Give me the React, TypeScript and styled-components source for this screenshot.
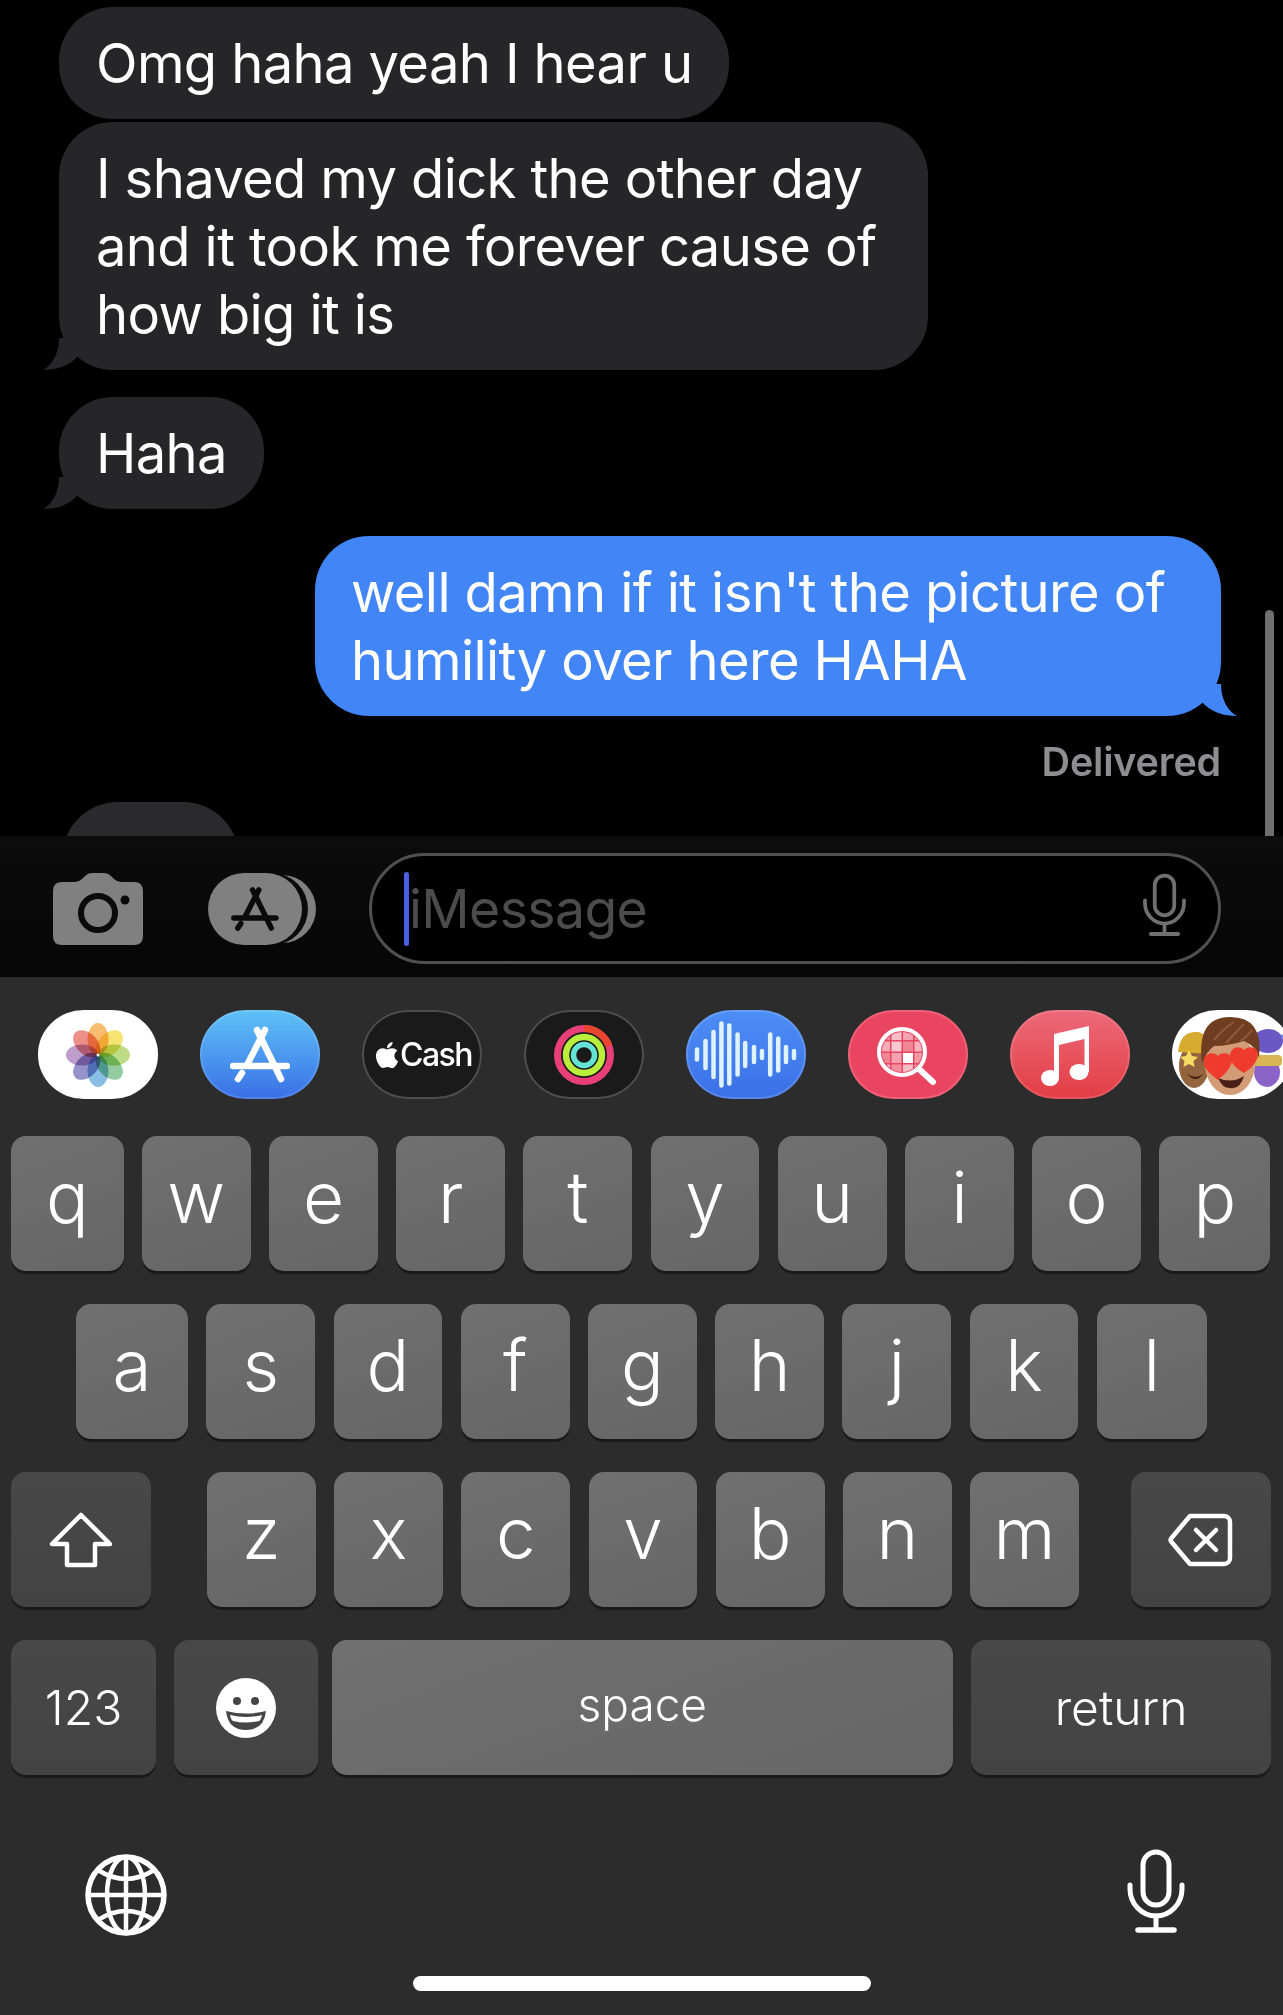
import React from 'react'
import styled, { createGlobalStyle } from 'styled-components'
import { FaApple } from 'react-icons/fa'

const GlobalStyle = createGlobalStyle`
  html, body {
    margin: 0;
    padding: 0;
    background: #000;
  }
  body {
    font-family: Inter, "Liberation Sans", sans-serif;
    color: #fff;
  }
`

const Screen = styled.div`
  width: 1283px;
  height: 2015px;
  overflow: hidden;
  display: flex;
  flex-direction: column;
`

/* ---------- conversation ---------- */

const Thread = styled.div`
  position: relative;
  height: 836px;
  padding-top: 7px;
  box-sizing: border-box;
  overflow: hidden;
  background: #000;
  display: flex;
  flex-direction: column;
`

const Bubble = styled.div<{ $width: number; $sent?: boolean; $gap?: number }>`
  position: relative;
  box-sizing: border-box;
  width: ${p => p.$width}px;
  margin-top: ${p => p.$gap ?? 0}px;
  margin-left: ${p => (p.$sent ? 315 : 59)}px;
  padding: 22px 0 22px ${p => (p.$sent ? 36 : 37)}px;
  border-radius: 54px;
  background: ${p => (p.$sent ? '#4285f6' : '#262628')};
  font-size: 54.3px;
  line-height: 68px;
  letter-spacing: -0.62px;
  white-space: nowrap;
`

const TypingBubble = styled.div`
  width: 177px;
  height: 112px;
  margin: 17px 0 0 62px;
  flex-shrink: 0;
  border-radius: 56px;
  background: #2a2a2c;
`

const Tail = styled.svg<{ $sent?: boolean }>`
  position: absolute;
  bottom: 0;
  width: 35px;
  height: 32px;
  ${p => (p.$sent ? 'right: -16px; transform: scaleX(-1);' : 'left: -16px;')}
`

const Delivered = styled.div`
  align-self: flex-end;
  margin: 23px 62px 0 0;
  font-size: 39.5px;
  line-height: 46px;
  font-weight: 600;
  letter-spacing: -0.2px;
  color: #8e8e90;
`

const ScrollThumb = styled.div`
  position: absolute;
  top: 610px;
  bottom: 0;
  left: 1265px;
  width: 9px;
  border-radius: 5px 5px 0 0;
  background: #6f6f6f;
`

/* ---------- input bar ---------- */

const InputBar = styled.div`
  height: 141px;
  box-sizing: border-box;
  padding: 4px 62px 0 53px;
  display: flex;
  align-items: center;
  background: linear-gradient(180deg, #0c0c0c, #060606);
`

const ToolIcon = styled.svg<{ $gap: number }>`
  flex-shrink: 0;
  margin-right: ${p => p.$gap}px;
`

const InputField = styled.div`
  flex: 1;
  height: 111px;
  box-sizing: border-box;
  padding: 0 16px 0 32px;
  display: flex;
  align-items: center;
  border: 3px solid #505050;
  border-radius: 56px;
  background: #000;
`

const Caret = styled.div`
  width: 5px;
  height: 74px;
  border-radius: 3px;
  background: #4a5fe6;
`

const Placeholder = styled.span`
  flex: 1;
  font-size: 53.5px;
  letter-spacing: -0.6px;
  color: #4c4c4c;
`

/* ---------- keyboard ---------- */

const Keyboard = styled.div`
  flex: 1;
  display: flex;
  flex-direction: column;
  background: #2c2c2c;
`

const Drawer = styled.div`
  display: flex;
  gap: 42px;
  margin: 33px 0 37px;
  padding-left: 38px;
  overflow: hidden;
`

const AppIcon = styled.div<{ $bg: string; $edge?: string }>`
  flex: 0 0 120px;
  height: 89px;
  box-sizing: border-box;
  border-radius: 46px / 44px;
  background: ${p => p.$bg};
  box-shadow: inset 0 0 0 2px ${p => p.$edge ?? 'transparent'};
  display: flex;
  align-items: center;
  justify-content: center;
  overflow: hidden;
  svg {
    display: block;
  }
`

const CashLabel = styled.span`
  margin-left: -2px;
  font-size: 32px;
  font-weight: 500;
  letter-spacing: -1.5px;
  color: #fff;
`

const Petal = styled.ellipse`
  mix-blend-mode: multiply;
  opacity: 0.72;
`

const KeyRow = styled.div<{ $left?: number }>`
  display: flex;
  gap: 18.4px;
  padding-left: ${p => p.$left ?? 11}px;
  padding-right: 12px;
  margin-bottom: 33px;
`

const KeyGroup = styled.div`
  display: flex;
  gap: 18.4px;
  margin-left: 37.6px;
  margin-right: auto;
`

const Key = styled.div<{ $w?: number; $dark?: boolean; $size?: number; $lift?: number; $nudge?: number }>`
  flex: ${p => (p.$w ? `0 0 ${p.$w}px` : '1 1 0')};
  height: 135px;
  box-sizing: border-box;
  margin-left: ${p => p.$nudge ?? 0}px;
  padding-bottom: ${p => p.$lift ?? 0}px;
  display: flex;
  align-items: center;
  justify-content: center;
  border-radius: 15px;
  background: ${p =>
    p.$dark
      ? 'linear-gradient(180deg, #484848, #434343)'
      : 'linear-gradient(160deg, #707070, #666666)'};
  box-shadow: 0 3px 0 #1a1a1a;
  font-size: ${p => p.$size ?? 71}px;
  font-weight: 300;
  color: #fff;
`

const BottomRow = styled.div`
  display: flex;
  justify-content: space-between;
  padding: 0 77px 0 76px;
  margin-top: 38px;
`

const HomeBar = styled.div`
  width: 458px;
  height: 15px;
  margin: 30px auto 0;
  border-radius: 8px;
  background: #fff;
`

/* ---------- drawings ---------- */

function AppStoreStrokes() {
  return (
    <>
      <path d="M27 5 L51 54" />
      <path d="M35 5 L17 40" />
      <path d="M3 41 H57" />
      <path d="M12 48 L8 54" />
    </>
  )
}

function MicIcon({ color, size }: { color: string; size: number }) {
  return (
    <svg width={size} height={size} viewBox="0 0 100 100" fill="none" stroke={color} strokeWidth="5" strokeLinecap="round">
      <rect x="37" y="6" width="26" height="53" rx="13" />
      <path d="M24 39 v4 a26 27 0 0 0 52 0 v-4" />
      <path d="M50 70 V84" />
      <path d="M32 84 H68" strokeWidth="5.5" />
    </svg>
  )
}

function Globe() {
  return (
    <svg width="100" height="100" viewBox="0 0 100 100" fill="none" stroke="#fff" strokeWidth="4.5">
      <circle cx="50" cy="49" r="38" strokeWidth="5.5" />
      <ellipse cx="50" cy="49" rx="19" ry="38" />
      <path d="M50 11 V87 M12 49 H88" />
      <path d="M22 24 Q50 42 78 24" />
      <path d="M22 74 Q50 56 78 74" />
    </svg>
  )
}

function ShiftIcon() {
  return (
    <svg width="70" height="60" viewBox="0 0 70 60" fill="none" stroke="#fff" strokeWidth="4.5" strokeLinejoin="round">
      <path d="M35 5 L6 34 H21 V55 H49 V34 H64 Z" />
    </svg>
  )
}

function DeleteIcon() {
  return (
    <svg width="72" height="58" viewBox="0 0 72 58" fill="none" stroke="#fff" strokeWidth="4.5" strokeLinecap="round" strokeLinejoin="round">
      <path d="M25 5 H59 a6 6 0 0 1 6 6 V47 a6 6 0 0 1 -6 6 H25 L6.5 31 a3 3 0 0 1 0 -4 Z" />
      <path d="M31 19 L51 39 M51 19 L31 39" />
    </svg>
  )
}

function EmojiIcon() {
  return (
    <svg width="60" height="60" viewBox="0 0 60 60">
      <circle cx="30" cy="30" r="30" fill="#fff" />
      <circle cx="21" cy="23" r="4" fill="#464646" />
      <circle cx="39" cy="23" r="4" fill="#464646" />
      <path d="M10 33 Q30 38 50 33 Q48 52 30 52 Q12 52 10 33 Z" fill="#464646" />
      <path d="M14 37 Q30 41 46 37 Q45 42 43 43 Q30 46 17 43 Q15 42 14 37 Z" fill="#fff" />
    </svg>
  )
}

const petals = ['#f5a33a', '#f2d83b', '#a5cf57', '#69b97a', '#5aa5d8', '#6d69b5', '#a577b8', '#e4645b']

function PhotosGlyph() {
  return (
    <svg width="120" height="89" viewBox="0 0 120 89">
      {petals.map((color, i) => (
        <Petal key={color} cx="60" cy="29" rx="10.5" ry="16" fill={color} transform={`rotate(${i * 45} 60 45)`} />
      ))}
      <circle cx="60" cy="45" r="1.5" fill="#fff" />
    </svg>
  )
}

function RingsGlyph() {
  return (
    <svg width="120" height="89" viewBox="0 0 120 89" fill="none">
      <circle cx="60" cy="45" r="26.5" stroke="#e93f78" strokeWidth="7" />
      <path d="M60 18.5 A26.5 26.5 0 0 1 85 36" stroke="#e8452e" strokeWidth="7" />
      <circle cx="60" cy="45" r="18" stroke="#b9ee3c" strokeWidth="6.5" />
      <circle cx="60" cy="45" r="10.5" stroke="#63e3d3" strokeWidth="5.5" />
    </svg>
  )
}

const waveBars = [
  [11, 10], [19.5, 27], [27.5, 45], [35.4, 62], [43.3, 58], [51.6, 40], [59.2, 23],
  [68, 15], [76, 7], [84.2, 40], [92.2, 32], [100, 15], [108, 7],
]

function WaveGlyph() {
  return (
    <svg width="120" height="89" viewBox="0 0 120 89" stroke="#dff3ff" strokeWidth="4.5" strokeLinecap="round">
      {waveBars.map(([x, h]) => (
        <line key={x} x1={x} x2={x} y1={44.5 - h / 2} y2={44.5 + h / 2} />
      ))}
    </svg>
  )
}

function LensGlyph() {
  const cells = [
    0.4, 0.65, 0.5, 0.4,
    0.55, 0.7, 0.35, 0.6,
    0.35, 0.5, 1, 0.45,
    0.6, 0.4, 0.65, 0.5,
  ]
  return (
    <svg width="120" height="89" viewBox="0 0 120 89">
      <clipPath id="lens-clip">
        <circle cx="54" cy="42" r="20" />
      </clipPath>
      <g clipPath="url(#lens-clip)">
        {cells.map((opacity, i) => (
          <rect
            key={i}
            x={32 + (i % 4) * 11.5}
            y={20 + Math.floor(i / 4) * 11.5}
            width="10"
            height="10"
            fill="#fff"
            opacity={opacity}
          />
        ))}
      </g>
      <circle cx="54" cy="42" r="23" fill="none" stroke="#fff" strokeWidth="4" />
      <path d="M71 59 L85 72" stroke="#fff" strokeWidth="6" strokeLinecap="round" />
    </svg>
  )
}

function MusicGlyph() {
  return (
    <svg width="120" height="89" viewBox="0 0 120 89" fill="#fff">
      <path d="M44 24 L79 16 V62 H74.5 V29 L49 35 V68 H44 Z" />
      <ellipse cx="40" cy="68" rx="9" ry="8" />
      <ellipse cx="69" cy="62" rx="9.5" ry="8" />
    </svg>
  )
}

function MemojiGlyph() {
  return (
    <svg width="120" height="89" viewBox="0 0 120 89">
      <ellipse cx="95" cy="62" rx="13" ry="15" fill="#8a62c8" />
      <ellipse cx="96" cy="31" rx="15" ry="12" fill="#6a58c4" />
      <rect x="81" y="45" width="29" height="11" rx="4" fill="#d9b452" />
      <circle cx="111" cy="26" r="1.6" fill="#3f7fe0" />
      <circle cx="116" cy="50" r="1.6" fill="#f1c232" />
      <ellipse cx="22" cy="56" rx="15" ry="22" fill="#94643f" />
      <path d="M6 42 Q8 22 24 22 Q38 22 38 44 Z" fill="#d6ab2f" />
      <path d="M17 40 l3 6 6 1 -4.5 4 1 6 -5.5 -3 -5.5 3 1 -6 -4.5 -4 6 -1 Z" fill="#f6dc63" />
      <path d="M15 64 Q24 70 31 64 Q24 74 15 64 Z" fill="#3a2012" />
      <ellipse cx="58" cy="54" rx="25" ry="31" fill="#d49c76" />
      <path d="M30 54 Q24 7 58 7 Q92 7 87 48 Q84 36 72 31 Q56 36 42 36 Q34 42 30 54 Z" fill="#6f3d20" />
      <path d="M42 30 Q52 18 62 12 M54 33 Q64 22 72 14 M68 31 Q76 26 80 20" fill="none" stroke="#93583a" strokeWidth="2" />
      <path d="M46 68 Q60 74 72 66 Q68 80 58 78 Q50 78 46 68 Z" fill="#4a1f18" />
      <path d="M46 70 C37 63 31 58 32 50 C33 43 42 41 46 46 C50 41 60 43 60 51 C59 58 53 64 46 70 Z" fill="#ee3b2e" />
      <path d="M72 63 C63 58 58 52 58 45 C59 37 68 35 72 40 C77 35 86 37 86 45 C85 52 80 58 72 63 Z" fill="#ee3b2e" />
    </svg>
  )
}

const topRow = ['w', 'e', 'r', 't', 'y', 'u', 'i', 'o']
const middleRow = ['s', 'd', 'f', 'g', 'h', 'j', 'k']
const bottomRow = ['z', 'x', 'c', 'v', 'b', 'n', 'm']

const lift = 14
const keyWidth = 108.8

export default function App() {
  return (
    <Screen>
      <GlobalStyle />
      <Thread>
        <Bubble $width={670}>Omg haha yeah I hear u</Bubble>
        <Bubble $width={869} $gap={3}>
          I shaved my dick the other day
          <br />
          and it took me forever cause of
          <br />
          how big it is
          <Tail viewBox="0 0 35 32">
            <path d="M16 0 C16 14 10 27 0 32 C14 32 26 28 35 18 V0 Z" fill="#262628" />
          </Tail>
        </Bubble>
        <Bubble $width={205} $gap={27}>
          Haha
          <Tail viewBox="0 0 35 32">
            <path d="M16 0 C16 14 10 27 0 32 C14 32 26 28 35 18 V0 Z" fill="#262628" />
          </Tail>
        </Bubble>
        <Bubble $width={906} $sent $gap={27}>
          well damn if it isn't the picture of
          <br />
          humility over here HAHA
          <Tail viewBox="0 0 35 32" $sent>
            <path d="M16 0 C16 14 10 27 0 32 C14 32 26 28 35 18 V0 Z" fill="#4285f6" />
          </Tail>
        </Bubble>
        <Delivered>Delivered</Delivered>
        <TypingBubble />
        <ScrollThumb />
      </Thread>

      <InputBar>
        <ToolIcon $gap={65} width="90" height="72" viewBox="0 0 90 72">
          <path
            d="M9 9 H22 Q26 9 29 6 L32 3 Q35 0 39 0 H51 Q55 0 58 3 L61 6 Q64 9 68 9 H81 Q90 9 90 18 V63 Q90 72 81 72 H9 Q0 72 0 63 V18 Q0 9 9 9 Z"
            fill="#808080"
          />
          <circle cx="45" cy="40" r="17" fill="none" stroke="#0a0a0a" strokeWidth="6" />
          <circle cx="72" cy="27" r="4.5" fill="#0a0a0a" />
        </ToolIcon>
        <ToolIcon $gap={53} width="108" height="72" viewBox="0 0 108 72">
          <rect x="20" y="2" width="88" height="68" rx="34" fill="#808080" />
          <rect x="0" y="0" width="100" height="72" rx="36" fill="#0a0a0a" />
          <rect x="0" y="0" width="94" height="72" rx="36" fill="#808080" />
          <g transform="translate(23.5 13) scale(0.78)" fill="none" stroke="#0a0a0a" strokeWidth="7" strokeLinecap="round">
            <AppStoreStrokes />
          </g>
        </ToolIcon>
        <InputField>
          <Caret />
          <Placeholder>iMessage</Placeholder>
          <MicIcon color="#707070" size={75} />
        </InputField>
      </InputBar>

      <Keyboard>
        <Drawer>
          <AppIcon $bg="#fff">
            <PhotosGlyph />
          </AppIcon>
          <AppIcon $bg="linear-gradient(180deg, #5ec2f7, #3a6fe6)" $edge="rgba(255,255,255,0.12)">
            <svg width="60" viewBox="0 0 60 60" fill="none" stroke="#fff" strokeWidth="6.5" strokeLinecap="round">
              <AppStoreStrokes />
            </svg>
          </AppIcon>
          <AppIcon $bg="#1a1a1a" $edge="#4e4e4e">
            <FaApple size={30} color="#fff" />
            <CashLabel>Cash</CashLabel>
          </AppIcon>
          <AppIcon $bg="#1a1a1a" $edge="#4e4e4e">
            <RingsGlyph />
          </AppIcon>
          <AppIcon $bg="linear-gradient(180deg, #4d8ef6, #3a70e6)" $edge="rgba(255,255,255,0.15)">
            <WaveGlyph />
          </AppIcon>
          <AppIcon $bg="#ea4560" $edge="rgba(255,255,255,0.15)">
            <LensGlyph />
          </AppIcon>
          <AppIcon $bg="linear-gradient(180deg, #ec6a7a, #e33d44)" $edge="rgba(255,255,255,0.12)">
            <MusicGlyph />
          </AppIcon>
          <AppIcon $bg="#fff">
            <MemojiGlyph />
          </AppIcon>
        </Drawer>

        <KeyRow>
          <Key $w={112.5} $lift={lift}>q</Key>
          {topRow.map(l => (
            <Key key={l} $w={keyWidth} $lift={lift}>{l}</Key>
          ))}
          <Key $w={111} $lift={lift}>p</Key>
        </KeyRow>
        <KeyRow $left={76}>
          <Key $w={112} $lift={lift}>a</Key>
          {middleRow.map(l => (
            <Key key={l} $w={keyWidth} $lift={lift}>{l}</Key>
          ))}
          <Key $w={110} $lift={lift}>l</Key>
        </KeyRow>
        <KeyRow>
          <Key $w={140} $dark>
            <ShiftIcon />
          </Key>
          <KeyGroup>
            {bottomRow.map(l => (
              <Key key={l} $w={keyWidth} $lift={lift}>{l}</Key>
            ))}
          </KeyGroup>
          <Key $w={140} $dark>
            <DeleteIcon />
          </Key>
        </KeyRow>
        <KeyRow>
          <Key $w={145} $dark $size={48}>123</Key>
          <Key $w={144} $dark>
            <EmojiIcon />
          </Key>
          <Key $w={621} $size={46} $lift={8} $nudge={-5}>space</Key>
          <Key $dark $size={48}>return</Key>
        </KeyRow>

        <BottomRow>
          <Globe />
          <MicIcon color="#fff" size={100} />
        </BottomRow>
        <HomeBar />
      </Keyboard>
    </Screen>
  )
}
